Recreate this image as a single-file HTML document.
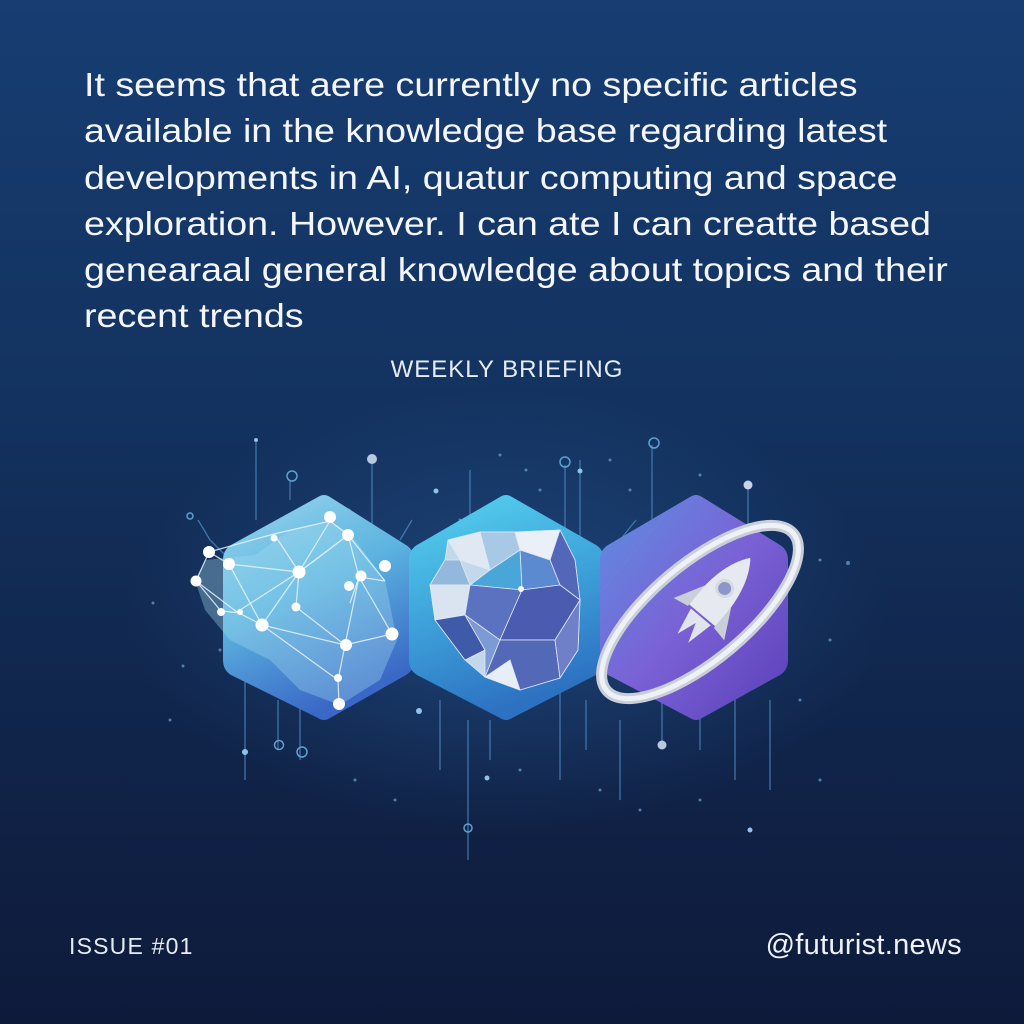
<!DOCTYPE html>
<html><head><meta charset="utf-8"><style>
html,body{margin:0;padding:0}
body{width:1024px;height:1024px;overflow:hidden;position:relative;
background:linear-gradient(180deg,#173d72 0%,#13325f 40%,#102348 75%,#0e1a3a 100%);
font-family:"Liberation Sans",sans-serif;color:#fff}
.t{position:absolute;left:84px;top:62px;width:800px;white-space:nowrap;font-size:33px;line-height:46.3px;color:#f4f6fb;transform:scaleX(1.14);transform-origin:0 0}
.wb{position:absolute;top:356px;left:0;width:1014px;text-align:center;font-size:24px;color:#e6ecf6;letter-spacing:1px}
.is{position:absolute;left:69px;top:933px;font-size:23px;color:#e6ecf6;letter-spacing:1.2px}
.fn{position:absolute;right:62px;top:929px;font-size:29px;color:#eef2f8;letter-spacing:.3px}
svg{position:absolute;left:0;top:0}
</style></head><body>
<div class="t">It seems that aere currently no specific articles<br>available in the knowledge base regarding latest<br>developments in AI, quatur computing and space<br>exploration. However. I can ate I can creatte based<br>genearaal general knowledge about topics and their<br>recent trends</div>
<div class="wb">WEEKLY BRIEFING</div>
<svg width="1024" height="1024" viewBox="0 0 1024 1024">
<defs>
<linearGradient id="h1" x1="0" y1="0" x2="0.4" y2="1"><stop offset="0" stop-color="#9bd6ee"/><stop offset=".5" stop-color="#5cb4e0"/><stop offset="1" stop-color="#3a68c6"/></linearGradient>
<linearGradient id="h2" x1="0" y1="0" x2="0.3" y2="1"><stop offset="0" stop-color="#58d4f0"/><stop offset=".5" stop-color="#3fa6dc"/><stop offset="1" stop-color="#2d72c2"/></linearGradient>
<linearGradient id="h3" x1="0" y1="0" x2="1" y2="1"><stop offset="0" stop-color="#5d8fe0"/><stop offset=".5" stop-color="#7a62d6"/><stop offset="1" stop-color="#5a3fb8"/></linearGradient>
<radialGradient id="glow" cx=".5" cy=".5" r=".5"><stop offset="0" stop-color="#2a5fa0" stop-opacity=".5"/><stop offset="1" stop-color="#2a5fa0" stop-opacity="0"/></radialGradient>
</defs>
<ellipse cx="505" cy="610" rx="380" ry="220" fill="url(#glow)"/>
<g stroke="#4c86bf" stroke-width="1.3" fill="none" opacity=".8">
<path d="M256 440V520M372 460V540M290 480V500M470 470V540M565 465V530M580 460V540M652 445V520M748 485V540M245 680V780M278 700V750M300 690V760M440 700V770M468 720V860M490 720V760M560 690V780M586 700V750M620 720V800M662 700V745M700 690V750M735 690V780M770 700V790M198 520L210 540L230 560M412 520L400 540M636 520L620 540"/>
</g>
<g fill="#8fc3ea">
<circle cx="256" cy="440" r="2"/><circle cx="372" cy="459" r="5" fill="#b8c8e0"/><circle cx="748" cy="485" r="4.5" fill="#c7d4e8"/><circle cx="662" cy="745" r="4.5" fill="#b8c8e0"/><circle cx="436" cy="491" r="2.5"/><circle cx="580" cy="471" r="2.5"/><circle cx="245" cy="752" r="3"/><circle cx="419" cy="711" r="3"/><circle cx="487" cy="778" r="2.5"/><circle cx="750" cy="830" r="2.5"/>
</g>
<g stroke="#5fa0d0" stroke-width="1.5" fill="none"><circle cx="292" cy="476" r="5"/><circle cx="565" cy="462" r="5"/><circle cx="654" cy="443" r="5"/><circle cx="279" cy="745" r="4.5"/><circle cx="302" cy="752" r="5"/><circle cx="468" cy="828" r="4"/><circle cx="190" cy="516" r="3"/></g>
<g fill="#6aa6d8" opacity=".7">
<circle cx="153" cy="603" r="1.5"/><circle cx="183" cy="666" r="1.5"/><circle cx="349" cy="510" r="1.5"/><circle cx="500" cy="455" r="1.5"/><circle cx="526" cy="470" r="1.5"/><circle cx="610" cy="460" r="1.5"/><circle cx="700" cy="475" r="1.5"/><circle cx="820" cy="560" r="1.5"/><circle cx="848" cy="563" r="2"/><circle cx="830" cy="640" r="1.5"/><circle cx="800" cy="700" r="1.5"/><circle cx="820" cy="780" r="1.5"/><circle cx="355" cy="780" r="1.5"/><circle cx="395" cy="800" r="1.5"/><circle cx="520" cy="770" r="1.5"/><circle cx="600" cy="790" r="1.5"/><circle cx="640" cy="810" r="1.5"/><circle cx="700" cy="800" r="1.5"/><circle cx="170" cy="720" r="1.5"/><circle cx="220" cy="650" r="1.5"/><circle cx="460" cy="520" r="1.5"/><circle cx="540" cy="490" r="1.5"/><circle cx="630" cy="490" r="1.5"/><circle cx="690" cy="500" r="1.5"/>
</g>
<path d="M318 497 Q324 493 330 497 L406 545 Q414 550 414 560 V660 Q414 670 406 675 L330 718 Q324 722 318 718 L231 675 Q223 670 223 660 V560 Q223 550 231 545 Z" fill="url(#h1)"/>
<path d="M500 497 Q506 493 512 497 L596 545 Q604 550 604 560 V660 Q604 670 596 675 L512 718 Q506 722 500 718 L417 675 Q409 670 409 660 V560 Q409 550 417 545 Z" fill="url(#h2)"/>
<path d="M690 497 Q696 493 702 497 L780 545 Q788 550 788 560 V660 Q788 670 780 675 L702 718 Q696 722 690 718 L608 675 Q600 670 600 660 V560 Q600 550 608 545 Z" fill="url(#h3)"/>
<path d="M255 555 L290 530 L330 521 L350 533 L370 560 L385 580 L397 640 L380 680 L340 705 L300 690 L270 660 L230 640 L205 610 L195 580 L205 560 Z" fill="#a6dcf2" opacity=".35"/>
<g stroke="#e8f4fc" stroke-width="1.2" fill="none" opacity=".85">
<path d="M209 552L229 564L299 572L348 535L359 577L385 581M299 572L262 625L345 645L392 634M262 625L237 612L196 581M229 564L262 625M299 572L318 558M318 558L348 535M299 572L296 607L345 645L338 680L339 704M262 625L338 680M348 535L385 581M359 577L350 603M209 552L274 534L299 572M274 534L330 521L348 535M196 581L209 552M196 581L221 611L241 613M345 645L359 577L392 634M330 521L299 572M237 612L299 572"/>
</g>
<g fill="#fff">
<circle cx="330" cy="517" r="6"/><circle cx="348" cy="535" r="6"/><circle cx="274" cy="538" r="3.5"/><circle cx="209" cy="552" r="6"/><circle cx="229" cy="564" r="6"/><circle cx="299" cy="572" r="6.5"/><circle cx="385" cy="566" r="6"/><circle cx="361" cy="576" r="5.5"/><circle cx="349" cy="586" r="5"/><circle cx="196" cy="581" r="5.5"/><circle cx="296" cy="607" r="4.5"/><circle cx="221" cy="612" r="4"/><circle cx="240" cy="612" r="3"/><circle cx="262" cy="625" r="6.5"/><circle cx="392" cy="634" r="6.5"/><circle cx="346" cy="645" r="6"/><circle cx="338" cy="678" r="4"/><circle cx="339" cy="704" r="6"/>
</g>
<g stroke="#dfe8f5" stroke-width=".8">
<polygon points="448,540 480,532 515,532 560,530 575,560 580,600 578,650 560,678 520,690 485,677 465,660 435,620 430,585 445,560" fill="#c4d8ec"/>
<polygon points="480,532 515,532 520,550 490,570" fill="#a8c9e6"/>
<polygon points="515,532 560,530 550,560 520,550" fill="#eaf0f8"/>
<polygon points="560,530 575,560 580,600 560,585 550,560" fill="#5366b8"/>
<polygon points="520,550 550,560 560,585 522,590" fill="#5c8ad0"/>
<polygon points="490,570 520,550 522,590 470,585" fill="#4aa6d8"/>
<polygon points="448,540 480,532 490,570 460,560" fill="#dfe8f3"/>
<polygon points="445,560 460,560 470,585 430,585" fill="#92b8dc"/>
<polygon points="430,585 470,585 465,615 435,620" fill="#d9e4f0"/>
<polygon points="470,585 522,590 500,640 465,615" fill="#5b72c0"/>
<polygon points="522,590 560,585 580,600 555,640 500,640" fill="#4a5bb0"/>
<polygon points="435,620 465,615 485,650 465,660" fill="#3f5aa8"/>
<polygon points="465,615 500,640 485,677 485,650" fill="#7d9ad4"/>
<polygon points="500,640 555,640 560,678 520,690 485,677" fill="#5468b8"/>
<polygon points="555,640 580,600 578,650 560,678" fill="#7080c8"/>
<polygon points="485,677 520,690 510,660" fill="#e8eef6"/>
</g>
<circle cx="521" cy="589" r="3" fill="#fff"/>
<ellipse cx="700" cy="612" rx="122" ry="48" transform="rotate(-40 700 612)" fill="none" stroke="#c9ced8" stroke-width="11"/>
<ellipse cx="700" cy="612" rx="122" ry="48" transform="rotate(-40 700 612)" fill="none" stroke="#eef1f6" stroke-width="5"/>
<g transform="rotate(40 715 600)">
<path d="M715 545 Q735 570 732 620 L698 620 Q695 570 715 545Z" fill="#e6e9ef"/>
<path d="M698 595 L682 625 L698 622Z M732 595 L748 625 L732 622Z" fill="#c9ced8"/>
<circle cx="715" cy="585" r="8" fill="#8f95c8" stroke="#d6dae3" stroke-width="3"/>
<path d="M702 622 L708 650 L715 630 L722 650 L728 622Z" fill="#e1e4ec"/>
</g>
</svg>
<div class="is">ISSUE #01</div>
<div class="fn">@futurist.news</div>
</body></html>
